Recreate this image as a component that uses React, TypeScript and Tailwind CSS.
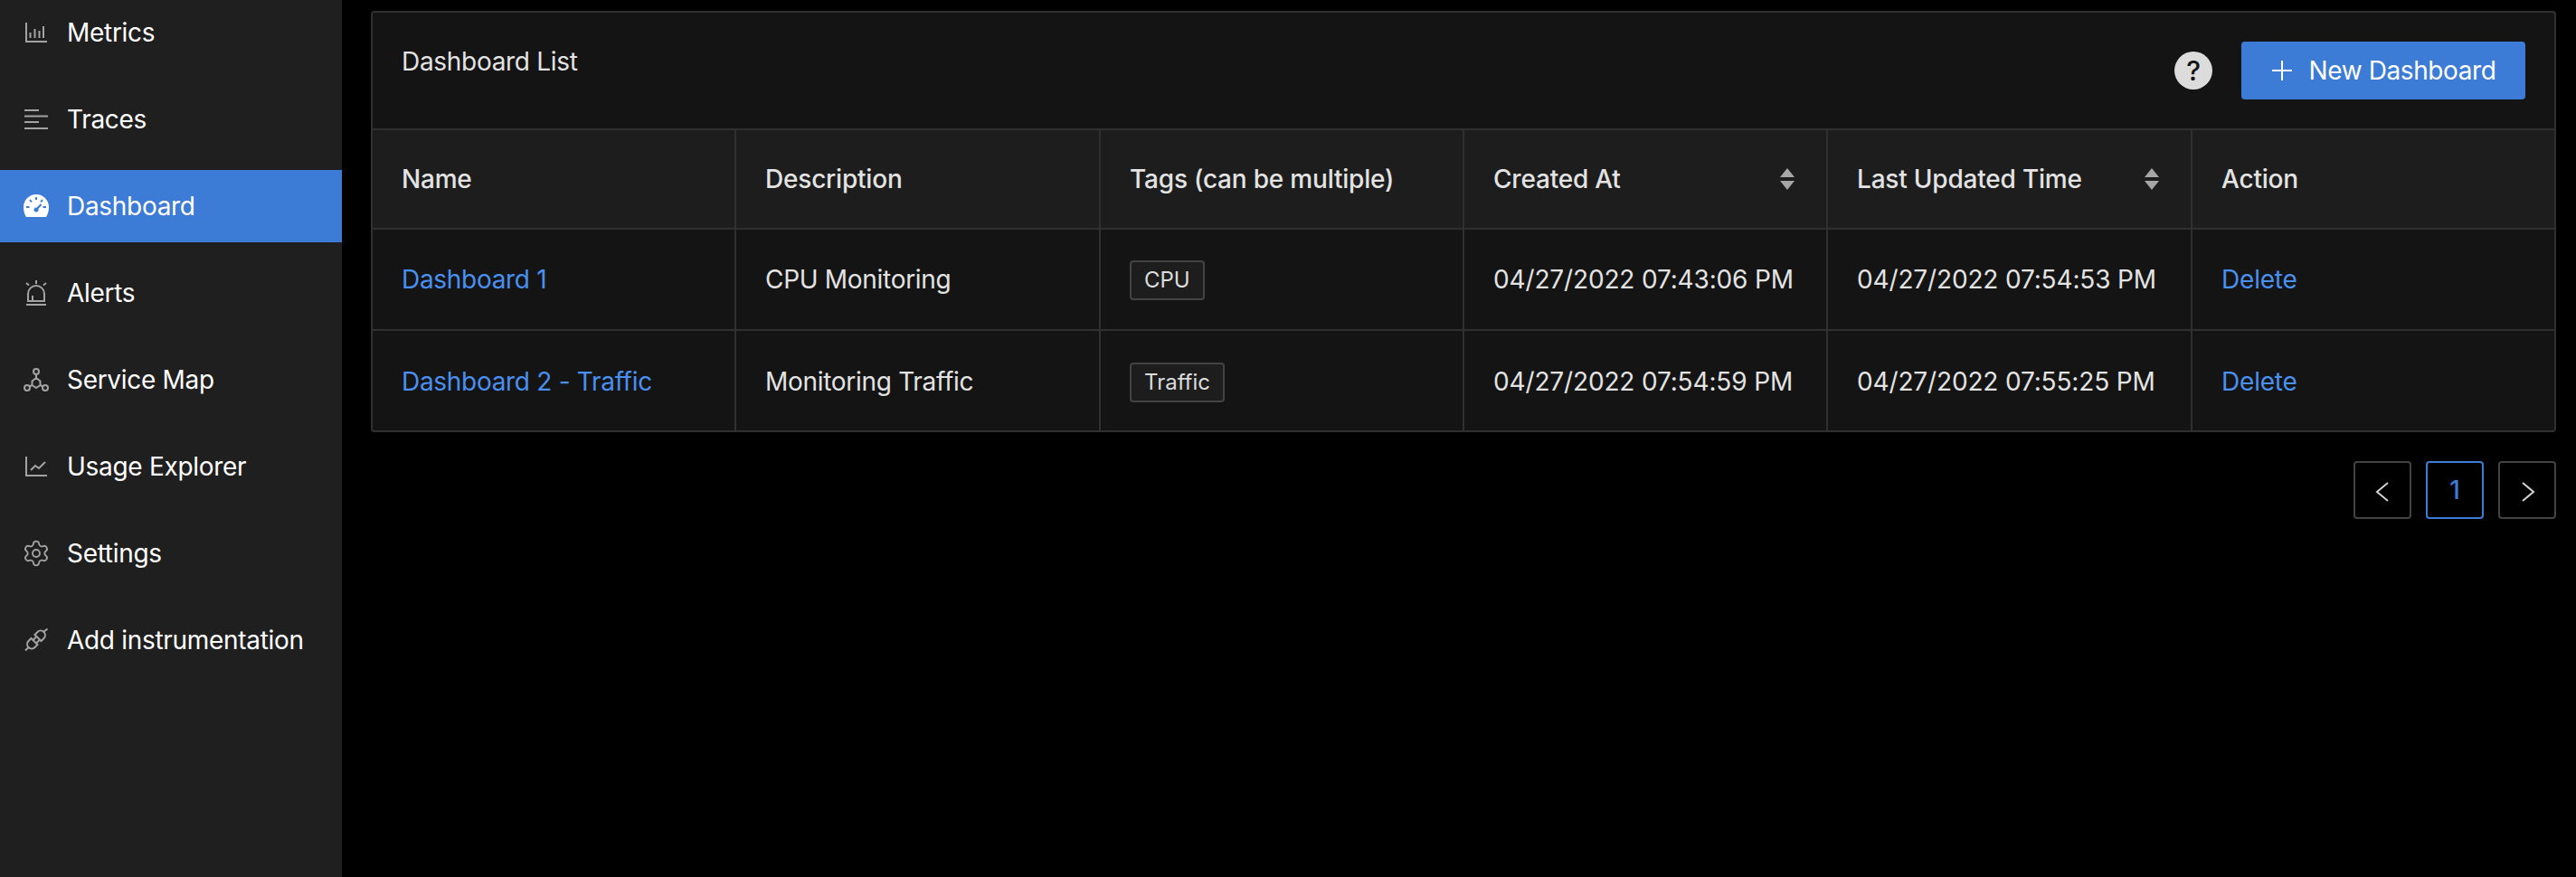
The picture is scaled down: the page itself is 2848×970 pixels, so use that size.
import React from 'react';
import { Settings } from 'lucide-react';

const MetricsIcon = () => (
  <svg width="28" height="28" viewBox="0 0 28 28" fill="none" stroke="currentColor" strokeWidth="2" className="shrink-0">
    <path d="M3 3v21h23" />
    <path d="M7.500 14v6M12.500 10v10M17.500 12v8M22 7v13" />
  </svg>
);

const TracesIcon = () => (
  <svg width="28" height="28" viewBox="0 0 28 28" fill="none" stroke="currentColor" strokeWidth="2" className="shrink-0">
    <path d="M1 4h16M1 10.500h26M1 17h16M1 24h26" />
  </svg>
);

const DashboardIcon = () => (
  <svg width="28" height="28" viewBox="0 0 28 28" fill="currentColor" className="shrink-0">
    <path d="M14 1C6.300 1 0 7.300 0 15c0 3.800.9 7.700 3 11h22c2.100-3.300 3-7.200 3-11C28 7.300 21.700 1 14 1z" />
    <path d="M14 4v3M7 7l2 2.500M21 7l-2 2.500M3 15h3.500M21.500 15H25M14 18l5.500-6" stroke="#3c7bd6" strokeWidth="2" fill="none" />
    <circle cx="14" cy="18" r="2.500" fill="#3c7bd6" />
  </svg>
);

const AlertsIcon = () => (
  <svg width="28" height="30" viewBox="0 0 28 30" fill="none" stroke="currentColor" strokeWidth="2" className="shrink-0">
    <path d="M5 24v-8a9 9 0 0 1 18 0v8z" />
    <path d="M14 1v4M3 4l3 2.500M25 4l-3 2.500M3 28h22M10 24v-6" />
  </svg>
);

const ServiceMapIcon = () => (
  <svg width="28" height="28" viewBox="0 0 28 28" fill="none" stroke="currentColor" strokeWidth="2" className="shrink-0">
    <circle cx="14" cy="5" r="3" />
    <circle cx="4" cy="23" r="3" />
    <circle cx="24" cy="23" r="3" />
    <path d="M14 8v4M14 12l4.500 3.500V20L14 23l-4.500-3v-4.500zM6.500 21.500l3-1.500M21.500 21.500l-3-1.500" />
  </svg>
);

const UsageIcon = () => (
  <svg width="28" height="28" viewBox="0 0 28 28" fill="none" stroke="currentColor" strokeWidth="2" className="shrink-0">
    <path d="M3 3v21h23" />
    <path d="M8 18l5-5 4 3 7-7" />
  </svg>
);

const PlugIcon = () => (
  <svg width="28" height="28" viewBox="0 0 28 28" fill="none" stroke="currentColor" strokeWidth="2" className="shrink-0">
    <path d="M12.500 8l7 7 3-3a4.950 4.950 0 0 0-7-7z" />
    <path d="M8.500 12l7 7-3 3a4.950 4.950 0 0 1-7-7z" />
    <path d="M10.500 14l3.500-3.500M14 17.500l3.500-3.500M22 5l4.500-3.500M5.500 22L2 25.500" />
  </svg>
);

const navItems = [
  { label: 'Metrics', icon: <MetricsIcon /> },
  { label: 'Traces', icon: <TracesIcon /> },
  { label: 'Dashboard', icon: <DashboardIcon />, active: true },
  { label: 'Alerts', icon: <AlertsIcon /> },
  { label: 'Service Map', icon: <ServiceMapIcon /> },
  { label: 'Usage Explorer', icon: <UsageIcon /> },
  { label: 'Settings', icon: <Settings size={32} strokeWidth={1.400} className="shrink-0" /> },
  { label: 'Add instrumentation', icon: <PlugIcon /> },
];

const rows = [
  {
    name: 'Dashboard 1',
    description: 'CPU Monitoring',
    tag: 'CPU',
    created: '04/27/2022 07:43:06 PM',
    updated: '04/27/2022 07:54:53 PM',
  },
  {
    name: 'Dashboard 2 - Traffic',
    description: 'Monitoring Traffic',
    tag: 'Traffic',
    created: '04/27/2022 07:54:59 PM',
    updated: '04/27/2022 07:55:25 PM',
  },
];

const SortCaret = () => (
  <svg width="16" height="24" viewBox="0 0 16 24" fill="#a6a6a6" className="mr-[3px] shrink-0">
    <path d="M8 0l8 10H0zM8 24L0 14h16z" />
  </svg>
);

export default function App() {
  return (
    <div className="flex h-[970px] w-[2848px] overflow-hidden bg-black font-['Inter',sans-serif] text-[28px] tracking-[-0.3px] text-[#e3e3e3]">
      {/* Sidebar */}
      <aside className="w-[378px] shrink-0 bg-[#1f1f1f]">
        <nav className="-mt-1 flex flex-col gap-4">
          {navItems.map((item) => (
            <div
              key={item.label}
              className={`flex h-20 items-center pl-[26px] text-white ${item.active ? 'bg-[#3c7bd6]' : ''}`}
            >
              <span className={`mr-[20px] flex w-7 justify-center ${item.active ? 'text-white' : 'text-[#a3a3a3]'}`}>
                {item.icon}
              </span>
              <span>{item.label}</span>
            </div>
          ))}
        </nav>
      </aside>

      {/* Content */}
      <main className="min-w-0 flex-1 pl-8 pr-[22px] pt-3">
        <div className="rounded-[4px] border-2 border-[#303030] bg-[#141414]">
          <div className="flex h-[130px] items-start justify-between border-b-2 border-[#303030] pl-8 pr-[32px]">
            <span className="mt-[34px] leading-[40px]">Dashboard List</span>
            <div className="mt-[32px] flex items-center gap-8">
              <span className="flex h-[42px] w-[42px] items-center justify-center rounded-full bg-[#dcdcdc] text-[30px] font-medium text-[#141414]">
                ?
              </span>
              <button className="flex h-16 w-[314px] items-center justify-center gap-[18px] rounded-[4px] bg-[#3c7bd6] tracking-[-0.4px] text-white">
                <svg width="24" height="24" viewBox="0 0 24 24" fill="none" stroke="currentColor" strokeWidth="2">
                  <path d="M12 1v22M1 12h22" />
                </svg>
                New Dashboard
              </button>
            </div>
          </div>

          <table className="w-full table-fixed border-separate border-spacing-0">
            <colgroup>
              <col className="w-[402px]" />
              <col className="w-[403px]" />
              <col className="w-[402px]" />
              <col className="w-[402px]" />
              <col className="w-[403px]" />
              <col />
            </colgroup>
            <thead>
              <tr className="bg-[#1d1d1d] text-left tracking-[-0.2px]">
                {['Name', 'Description', 'Tags (can be multiple)', 'Created At', 'Last Updated Time', 'Action'].map((title, i) => (
                  <th
                    key={title}
                    className={`h-[110px] border-b-2 border-[#303030] px-8 font-medium ${i < 5 ? 'border-r-2' : ''}`}
                  >
                    <div className="flex items-center justify-between">
                      <span>{title}</span>
                      {(i === 3 || i === 4) && <SortCaret />}
                    </div>
                  </th>
                ))}
              </tr>
            </thead>
            <tbody>
              {rows.map((row, r) => {
                const cell = r === 0 ? 'h-[112px] border-b-2 border-[#303030] px-8' : 'h-[110px] border-[#303030] px-8 pt-[2px]';
                return (
                  <tr key={row.name}>
                    <td className={`${cell} border-r-2 text-[#4a90f0]`}>{row.name}</td>
                    <td className={`${cell} border-r-2`}>{row.description}</td>
                    <td className={`${cell} border-r-2`}>
                      <span className="inline-flex h-[44px] items-center rounded-[4px] border-2 border-[#434343] bg-[#1d1d1d] px-[14px] text-[24px] tracking-normal text-[#dcdcdc]">
                        {row.tag}
                      </span>
                    </td>
                    <td className={`${cell} border-r-2 tracking-[-0.15px]`}>{row.created}</td>
                    <td className={`${cell} border-r-2 tracking-[-0.15px]`}>{row.updated}</td>
                    <td className={`${cell} tracking-[-0.2px] text-[#4a90f0]`}>Delete</td>
                  </tr>
                );
              })}
            </tbody>
          </table>
        </div>

        {/* Pagination */}
        <div className="mt-8 flex justify-end gap-4">
          <button className="flex h-16 w-16 items-center justify-center rounded-[4px] border-2 border-[#434343] text-[#d0d0d0]">
            <svg width="16" height="24" viewBox="0 0 16 24" fill="none" stroke="currentColor" strokeWidth="2" className="mt-1">
              <path d="M14 2L2 12l12 10" />
            </svg>
          </button>
          <button className="flex h-16 w-16 items-center justify-center rounded-[4px] border-2 border-[#3c7bd6] font-medium text-[#3c7bd6]">
            1
          </button>
          <button className="flex h-16 w-16 items-center justify-center rounded-[4px] border-2 border-[#434343] text-[#d0d0d0]">
            <svg width="16" height="24" viewBox="0 0 16 24" fill="none" stroke="currentColor" strokeWidth="2" className="ml-[2px] mt-1">
              <path d="M2 2l12 10L2 22" />
            </svg>
          </button>
        </div>
      </main>
    </div>
  );
}
